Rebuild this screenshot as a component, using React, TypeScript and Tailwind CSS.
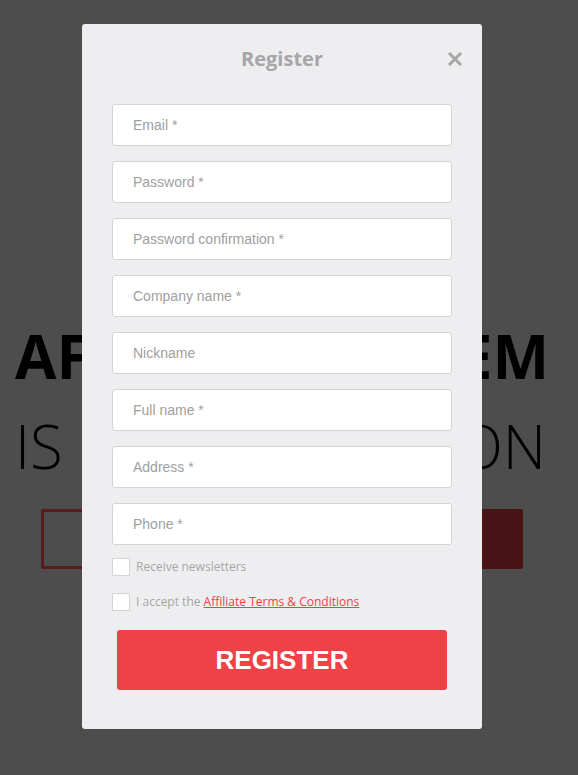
import { useState } from 'react';

const fields = [
  'Email *',
  'Password *',
  'Password confirmation *',
  'Company name *',
  'Nickname',
  'Full name *',
  'Address *',
  'Phone *',
];

export default function App() {
  const [news, setNews] = useState(false);
  const [terms, setTerms] = useState(false);

  return (
    <div className="relative w-[578px] h-[775px] overflow-hidden bg-[#4d4d4d]">
      {/* page behind the modal */}
      <div className="pt-[316px] px-[15px] text-black" style={{ fontFamily: '"Open Sans", sans-serif' }}>
        <div className="flex justify-between text-[60px] font-bold leading-[80px]">
          <span>AF</span>
          <span className="pr-[14px]">EM</span>
        </div>
        <div className="flex justify-between text-[60px] font-light leading-[80px] mt-[10px]">
          <span>IS</span>
          <span className="pr-[17px]">ON</span>
        </div>
        <div className="flex justify-between mt-[23px] px-[26px] pr-[40px]">
          <div className="w-[200px] h-[60px] border-[3px] border-[#5a1a1e] rounded-[2px]" />
          <div className="w-[200px] h-[60px] bg-[#4a1416] rounded-[2px]" />
        </div>
      </div>

      {/* modal */}
      <div className="absolute left-[82px] top-[24px] w-[400px] h-[705px] bg-[#eeeef0] rounded-[3px] px-[30px]">
        <div className="relative h-[70px] flex items-center justify-center">
          <h2 className="text-[20px] font-bold text-[#a6a6a6]" style={{ fontFamily: '"Open Sans", sans-serif' }}>
            Register
          </h2>
          <button className="absolute right-[-11px] top-[27px] w-[16px] h-[16px]">
            <svg viewBox="0 0 16 16" width="16" height="16">
              <path d="M2 2 L14 14 M14 2 L2 14" stroke="#a6a6a6" strokeWidth="3" strokeLinecap="butt" />
            </svg>
          </button>
        </div>

        <div className="mt-[10px] flex flex-col gap-[15px]">
          {fields.map((f) => (
            <input
              key={f}
              placeholder={f}
              className="h-[42px] w-full bg-white border border-[#d4d4d4] rounded-[3px] pl-[20px] text-[14px] text-[#555] placeholder:text-[#a0a0a0] outline-none"
              style={{ fontFamily: '"Liberation Sans", Arial, sans-serif' }}
            />
          ))}
        </div>

        <div className="text-[12px] text-[#a6a6a6]" style={{ fontFamily: '"Open Sans", sans-serif' }}>
          <label className="mt-[13px] flex items-center gap-[6px] h-[18px]">
            <input type="checkbox" checked={news} onChange={() => setNews(!news)} className="hidden" />
            <span className="w-[18px] h-[18px] bg-white border border-[#d4d4d4]" />
            <span>Receive newsletters</span>
          </label>
          <label className="mt-[17px] flex items-center gap-[6px] h-[18px]">
            <input type="checkbox" checked={terms} onChange={() => setTerms(!terms)} className="hidden" />
            <span className="w-[18px] h-[18px] bg-white border border-[#d4d4d4]" />
            <span>
              I accept the <a href="#" className="text-[#ef4146] underline">Affiliate Terms &amp; Conditions</a>
            </span>
          </label>
        </div>

        <div className="px-[5px] mt-[19px]">
          <button
            className="w-full h-[60px] bg-[#ef4146] rounded-[3px] text-white text-[26px] font-bold"
            style={{ fontFamily: '"Liberation Sans", Arial, sans-serif' }}
          >
            REGISTER
          </button>
        </div>
      </div>
    </div>
  );
}
